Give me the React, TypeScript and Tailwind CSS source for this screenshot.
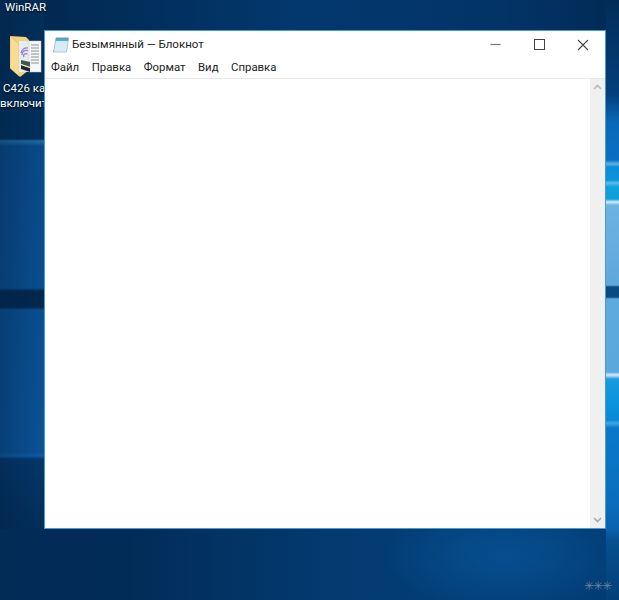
const menus = ["Файл", "Правка", "Формат", "Вид", "Справка"];

function NotepadIcon() {
  return (
    <svg width="16" height="16" viewBox="0 0 16 16" className="shrink-0">
      <path d="M3 1 L15.5 1 L13.5 15 L0.5 15 Z" fill="#c4e2ea" stroke="#8aa9b8" strokeWidth="0.7" />
      <path d="M3 1 L15.5 1 L15 4 L2.6 4 Z" fill="#56b0d4" />
      <path d="M3 4.5 L14.8 4.5 L13 14.5 L1.2 14.5 Z" fill="#d6ecf2" />
      <path d="M4 0.5 V2.6 M6 0.5 V2.6 M8 0.5 V2.6 M10 0.5 V2.6 M12 0.5 V2.6 M14 0.5 V2.6" stroke="#66808e" strokeWidth="0.7" />
    </svg>
  );
}

function FolderIcon() {
  return (
    <svg width="32" height="42" viewBox="0 0 32 42">
      <path d="M0 0 L16 1 L19 4 L19 34 L10 41 L0 32 Z" fill="#f2d27c" />
      <path d="M0 0 L9 8 L9 40 L0 32 Z" fill="#f7dc92" stroke="#d9b25c" strokeWidth="0.5" />
      <rect x="9" y="5" width="13" height="31" fill="#e9ecef" />
      <rect x="19" y="5" width="12" height="31" fill="#f7f7f7" stroke="#c6c9cc" strokeWidth="0.5" />
      <path d="M21 9 H29 M21 12 H29 M21 15 H29 M21 18 H29 M21 21 H29 M21 24 H29 M21 27 H29" stroke="#8b9097" strokeWidth="1" />
      <path d="M11 17 A6 6 0 0 1 18 12 M12 19 A4 4 0 0 1 18 15 M14 21 A2 2 0 0 1 17.5 18.5" fill="none" stroke="#8f86d8" strokeWidth="1.3" />
      <path d="M11 24 L20 26 L20 31 L11 28 Z" fill="#3f5a4c" />
      <path d="M11 29 L20 32 L20 36 L11 33 Z" fill="#23272b" />
      <path d="M11 28 L20 31 L20 32 L11 29 Z" fill="#e8e8e8" />
    </svg>
  );
}

function Scrollbar() {
  return (
    <div className="w-[15px] shrink-0 bg-[#f0f0f0] flex flex-col justify-between items-center py-[5px]">
      <svg width="9" height="6" viewBox="0 0 9 6">
        <path d="M1 5 L4.5 1.5 L8 5" fill="none" stroke="#b9b9b9" strokeWidth="1.6" />
      </svg>
      <svg width="9" height="6" viewBox="0 0 9 6">
        <path d="M1 1 L4.5 4.5 L8 1" fill="none" stroke="#a9a9a9" strokeWidth="1.6" />
      </svg>
    </div>
  );
}

export default function App() {
  return (
    <div
      className="relative w-[619px] h-[600px] overflow-hidden font-['Roboto',sans-serif] bg-[#02305c]"
      style={{
        background: [
          // right strip
          "linear-gradient(180deg,#022c58 0,#04407c 95px,#0a68b8 122px,#0a6fc2 160px,#5fb4e4 164px,#0b8ed8 167px,#0d93da 180px,#5fbce8 183px,#10a0dc 187px,#10a0dc 199px,#dbeaf4 202px,#6cb4e2 205px,#5ea8dc 285px,#0a4a82 287px,#0a4a82 297px,#5eaade 299px,#5aa8de 372px,#dbeaf4 375px,#1a9ae0 379px,#0a93dc 404px,#0a88d6 420px,#40a8e4 423px,#0a78c8 428px,#0a6ec0 500px,#0a62ae 529px,#07508f 540px,#033f78 600px) right top/13px 100% no-repeat",
          // left side falls off toward the screen edge
          "linear-gradient(90deg,rgba(1,30,60,0.35) 0,transparent 44px) left top/44px 529px no-repeat",
          // left strip bands
          "linear-gradient(180deg,#022e58 0,#02305c 139px,#1e6eab 141px,#0a4a8a 146px,#0a4f90 288px,#02284e 291px,#02284e 307px,#0a4f92 310px,#0b5298 452px,#0c5ea6 456px,#04376a 459px,#022e5a 529px) left top/44px 529px no-repeat",
          // top band
          "linear-gradient(90deg,#01264c 0,#03386e 300px,#033468 500px,#022a55 619px) left top/100% 30px no-repeat",
          // bottom glow
          "radial-gradient(ellipse 120px 55px at 505px 555px,#064e90 0,#054885 45%,transparent 100%)",
          "linear-gradient(90deg,#022c56 0,#022c58 130px,#033a70 330px,#033f78 480px,#033c74 619px)",
        ].join(","),
      }}
    >
      {/* Desktop icons */}
      <span className="absolute left-[5px] top-0 text-[11.5px] leading-[14px] text-white [text-shadow:0_1px_2px_#000]">
        WinRAR
      </span>
      <div className="absolute left-[10px] top-[36px]">
        <FolderIcon />
      </div>
      <div className="absolute left-0 top-[81px] w-[44px] text-[11.5px] leading-[15px] text-white [text-shadow:0_1px_2px_#000] whitespace-nowrap">
        <div className="pl-[3px]">С426 ка</div>
        <div>включит</div>
      </div>

      {/* Notepad window */}
      <div className="absolute left-[44px] top-[30px] w-[562px] h-[499px] flex flex-col bg-white border border-[#4a9ad8]">
        <div className="h-[27px] shrink-0 flex items-center pl-[8px]">
          <NotepadIcon />
          <span className="ml-[3px] text-[11.5px] text-[#222] leading-none">Безымянный — Блокнот</span>
          <div className="ml-auto flex items-center">
            <div className="w-[44px] flex justify-center">
              <svg width="11" height="11" viewBox="0 0 11 11"><path d="M0.5 5.5 H10.5" stroke="#777" strokeWidth="1.2" /></svg>
            </div>
            <div className="w-[44px] flex justify-center">
              <svg width="11" height="11" viewBox="0 0 11 11"><rect x="0.5" y="0.5" width="10" height="10" fill="none" stroke="#444" strokeWidth="1" /></svg>
            </div>
            <div className="w-[44px] flex justify-center">
              <svg width="12" height="12" viewBox="0 0 12 12"><path d="M1 1 L11 11 M11 1 L1 11" stroke="#444" strokeWidth="1.1" /></svg>
            </div>
          </div>
        </div>
        <div className="h-[21px] shrink-0 flex items-center gap-[12.5px] pl-[6px] border-b border-[#e8e8e8] text-[11.4px] text-[#222]">
          {menus.map((m) => (
            <span key={m}>{m}</span>
          ))}
        </div>
        <div className="flex-1 flex justify-end min-h-0">
          <Scrollbar />
        </div>
      </div>

      {/* Watermark */}
      <span className="absolute left-[584px] top-[579px] text-[12px] leading-[14px] tracking-[-1px] text-[#5f82a3] font-['DejaVu_Sans',sans-serif]">
        ✳✳✳
      </span>
    </div>
  );
}
